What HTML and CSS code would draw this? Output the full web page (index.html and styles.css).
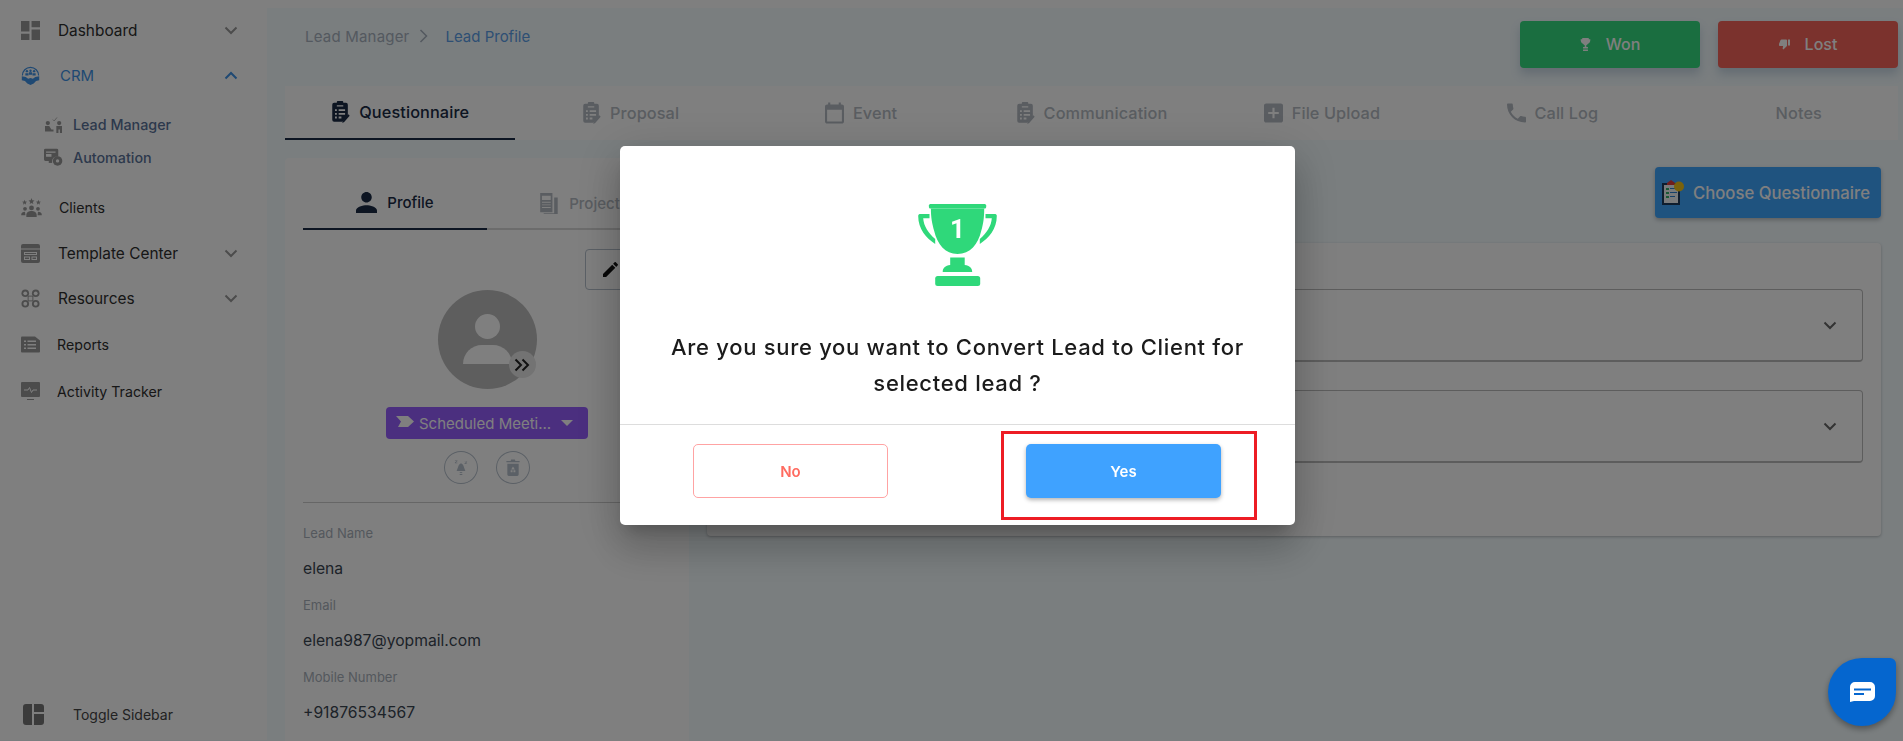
FILE: index.html
```html
<!DOCTYPE html>
<html lang="en">
<head>
    <meta charset="UTF-8">
    <meta name="viewport" content="width=device-width, initial-scale=1.0">
    <title>Lead Profile</title>
    <link rel="stylesheet" href="styles.css">
</head>
<body>
    <svg class="sprite" aria-hidden="true">
        <symbol id="i-clipboard" viewBox="0 0 20 24">
            <path d="M7 0h5a1 1 0 0 1 1 1v1h3a2 2 0 0 1 2 2v12l-6 6.500H3a2 2 0 0 1-2-2V4a2 2 0 0 1 2-2h3V1a1 1 0 0 1 1-1z"/>
            <path fill="var(--cut, #fff)" d="M6 4.500h7v1.500H6zM4 9h2v2H4zm4 0h7v2H8zm-4 4h2v2H4zm4 0h7v2H8zm-4 4h2v2H4zm4 0h3v2H8z"/>
            <path d="M18.500 14.500l1.500 1.500-6 7-2 1 .5-2.500z"/>
        </symbol>
        <symbol id="i-chevron-down" viewBox="0 0 14 9">
            <path d="M1.500 1.500L7 7l5.500-5.500" fill="none" stroke="currentColor" stroke-width="2"/>
        </symbol>
    </svg>

    <div class="app">
        <aside class="sidebar">
            <nav class="nav">
                <a class="nav-item big"><svg class="nav-icon" viewBox="3 3 18 18"><path d="M3 13h8V3H3v10zm0 8h8v-6H3v6zm10 0h8V11h-8v10zm0-18v6h8V3h-8z"/></svg><span class="nav-text">Dashboard</span><svg class="nav-arrow"><use href="#i-chevron-down"/></svg></a>
                <a class="nav-item active"><svg class="nav-icon" viewBox="0 0 24 24"><path d="M12 1a11 11 0 0 0-11 11h1.500A9.500 9.500 0 0 1 12 2.500 9.500 9.500 0 0 1 21.500 12H23A11 11 0 0 0 12 1z"/><circle cx="7.500" cy="6.500" r="1.500"/><circle cx="12" cy="6" r="1.500"/><circle cx="16.500" cy="6.500" r="1.500"/><path d="M5.500 9h4v3h-4zm4.500-1h4v3h-4zm4.500 1h4v3h-4zM1 13l5 1 3 2 3-1 3 1 3-2 5-1v5l-4 1-3 3-4 2-4-2-3-3-4-1z"/></svg><span class="nav-text crm-text">CRM</span><svg class="nav-arrow up"><use href="#i-chevron-down"/></svg></a>
                <div class="subnav">
                    <a class="sub-item"><svg class="sub-icon" viewBox="0 0 24 24"><circle cx="4" cy="10" r="3"/><circle cx="20" cy="10" r="3"/><path d="M0 14h6l3 5h3v3H0zM16 14h8v10h-3v-5h-2v5h-3z"/><path d="M11 5l2 2 4-5" fill="none" stroke="#999" stroke-width="1"/></svg><span>Lead Manager</span></a>
                    <a class="sub-item"><svg class="sub-icon wide" viewBox="0 0 28 26"><path d="M2 0h17a2 2 0 0 1 2 2v10h-4a7 7 0 0 0-5 6H2a2 2 0 0 1-2-2V2a2 2 0 0 1 2-2z"/><path fill="#fff" d="M3 4h14v2H3zM3 8h8v4H3z"/><path d="M7 18h5v3H7z"/><circle cx="20" cy="18" r="7"/><circle cx="20" cy="18" r="2.500" fill="#fff"/></svg><span>Automation</span></a>
                </div>
                <a class="nav-item clients"><svg class="nav-icon wide" viewBox="0 0 24 22"><path d="M12 0l1 2.500 2.500.3-2 1.700.6 2.500L12 5.700 9.900 7l.6-2.500-2-1.700 2.500-.3zM4 2l.8 2 2.200.2-1.700 1.400.5 2.100L4 6.500 2.200 7.700l.5-2.100L1 4.200 3.200 4zm16 0l.8 2 2.200.2-1.700 1.400.5 2.100L20 6.500l-1.800 1.200.5-2.100L17 4.200l2.200-.2z"/><circle cx="12" cy="11.500" r="2.800"/><circle cx="4.500" cy="12.500" r="2.200"/><circle cx="19.500" cy="12.500" r="2.200"/><path d="M6 22v-2.500c0-3 3-4.500 6-4.500s6 1.500 6 4.500V22zM0 20c0-3 2-4 4.500-4L5 20zm24 0c0-3-2-4-4.500-4L19 20z"/></svg><span class="nav-text">Clients</span></a>
                <a class="nav-item big"><svg class="nav-icon" viewBox="0 0 19 19"><path d="M2 0h15a2 2 0 0 1 2 2v15a2 2 0 0 1-2 2H2a2 2 0 0 1-2-2V2a2 2 0 0 1 2-2z"/><path fill="#fff" d="M0 4.500h19v1H0zM3 8h13v3H3zM3 12.500h6V16H3zm7.500 0H16V16h-5.500z"/><path d="M4 9h11v1H4zm0 4.500h4V15H4zm7.500 0H15V15h-3.500z"/></svg><span class="nav-text">Template Center</span><svg class="nav-arrow"><use href="#i-chevron-down"/></svg></a>
                <a class="nav-item big"><svg class="nav-icon" viewBox="0 0 20 20"><circle cx="4.500" cy="4.500" r="4"/><circle cx="15.500" cy="4.500" r="4"/><circle cx="4.500" cy="15.500" r="4"/><circle cx="15.500" cy="15.500" r="4"/><rect x="7.500" y="7.500" width="5" height="5" fill="#fff" stroke="#999"/><circle cx="4.500" cy="4.500" r="2" fill="#fff"/><circle cx="15.500" cy="4.500" r="2" fill="#fff"/><circle cx="4.500" cy="15.500" r="2" fill="#fff"/><circle cx="15.500" cy="15.500" r="2" fill="#fff"/></svg><span class="nav-text">Resources</span><svg class="nav-arrow"><use href="#i-chevron-down"/></svg></a>
                <a class="nav-item reports"><svg class="nav-icon" viewBox="0 0 19 16"><path d="M1 0h13l5 4v11a1 1 0 0 1-1 1H1a1 1 0 0 1-1-1V1a1 1 0 0 1 1-1z"/><path fill="#fff" d="M3 4h2v1.500H3zm3.500 0H15v1.500H6.500zM3 7.500h2V9H3zm3.500 0H15V9H6.500zM3 11h2v1.500H3zm3.500 0H15v1.500H6.500z"/></svg><span class="nav-text">Reports</span></a>
                <a class="nav-item activity"><svg class="nav-icon" viewBox="0 0 19 19"><path d="M1 0h17a1 1 0 0 1 1 1v13a1 1 0 0 1-1 1H1a1 1 0 0 1-1-1V1a1 1 0 0 1 1-1zM6 17h7v1H6z"/><path d="M3 8h4l1.500-2.500 2 5L12 8h4" fill="none" stroke="#fff"/></svg><span class="nav-text">Activity Tracker</span></a>
            </nav>
            <a class="toggle-sidebar"><svg class="toggle-icon" viewBox="0 0 21 21"><path d="M3 0h6v21H3a3 3 0 0 1-3-3V3a3 3 0 0 1 3-3zm8 0h7a3 3 0 0 1 3 3v5H11zm0 10h10v8a3 3 0 0 1-3 3h-7z"/></svg><span>Toggle Sidebar</span></a>
        </aside>

        <main class="main">
            <div class="page-head">
                <div class="breadcrumb">
                    <span>Lead Manager</span>
                    <svg class="crumb-sep" viewBox="0 0 9 14"><path d="M1.500 1l6 6-6 6" fill="none" stroke="currentColor" stroke-width="1.500"/></svg>
                    <span class="crumb-current">Lead Profile</span>
                </div>
                <div class="head-actions">
                    <button class="btn-status won"><svg class="btn-icon" viewBox="0 0 12 16"><path d="M2 0h8v1.500h2c0 3-1 5-3 5.500-.5 1-1.500 1.500-2 1.500V11h2v2H3v-2h2V8.500C4.500 8.500 3.500 8 3 7 1 6.500 0 4.500 0 1.500h2zM3 14h6v2H3z"/></svg>Won</button>
                    <button class="btn-status lost"><svg class="btn-icon" viewBox="1 3 22 20"><path d="M15 3H6c-.83 0-1.540.500-1.840 1.220l-3.020 7.050c-.090.230-.140.470-.140.730v2c0 1.100.900 2 2 2h6.310l-.950 4.570-.030.320c0 .410.170.790.440 1.060L9.830 23l6.590-6.590c.360-.360.580-.860.580-1.410V5c0-1.100-.900-2-2-2zm4 0v12h4V3h-4z"/></svg>Lost</button>
                </div>
            </div>

            <div class="tabs">
                <div class="tab active"><svg class="tab-icon"><use href="#i-clipboard"/></svg>Questionnaire</div>
                <div class="tab"><svg class="tab-icon"><use href="#i-clipboard"/></svg>Proposal</div>
                <div class="tab"><svg class="tab-icon" viewBox="3 2 18 20"><path d="M19 4h-1V2h-2v2H8V2H6v2H5c-1.100 0-2 .900-2 2v14c0 1.100.900 2 2 2h14c1.100 0 2-.900 2-2V6c0-1.100-.900-2-2-2zm0 16H5V9h14v11z"/></svg>Event</div>
                <div class="tab"><svg class="tab-icon"><use href="#i-clipboard"/></svg>Communication</div>
                <div class="tab"><svg class="tab-icon plus" viewBox="3 3 18 18"><path d="M19 3H5c-1.110 0-2 .900-2 2v14c0 1.100.890 2 2 2h14c1.100 0 2-.900 2-2V5c0-1.100-.900-2-2-2zm-2 10h-4v4h-2v-4H7v-2h4V7h2v4h4v2z"/></svg>File Upload</div>
                <div class="tab"><svg class="tab-icon" viewBox="3 3 18 18"><path d="M6.620 10.790c1.440 2.830 3.760 5.140 6.590 6.590l2.200-2.200c.270-.270.670-.360 1.020-.240 1.120.370 2.330.570 3.570.570.550 0 1 .450 1 1V20c0 .550-.450 1-1 1-9.390 0-17-7.610-17-17 0-.550.450-1 1-1h3.500c.550 0 1 .450 1 1 0 1.250.200 2.450.570 3.570.110.350.030.740-.250 1.020l-2.200 2.200z"/></svg>Call Log</div>
                <div class="tab notes">Notes</div>
            </div>

            <div class="content">
                <section class="profile-card">
                    <div class="profile-tabs">
                        <div class="profile-tab active"><svg class="person-icon" viewBox="4 4 16 16"><path d="M12 12c2.210 0 4-1.790 4-4s-1.790-4-4-4-4 1.790-4 4 1.790 4 4 4zm0 2c-2.670 0-8 1.340-8 4v2h16v-2c0-2.660-5.330-4-8-4z"/></svg>Profile</div>
                        <div class="profile-tab"><svg class="person-icon" viewBox="0 0 21 24"><path d="M1 0h14v22H1z"/><path fill="#fff" d="M3 3h10v5H3zm0 7h10v1H3zm0 3h10v1H3zm0 3h10v1H3z"/><path d="M17 5h4v19H5v-1h12z"/></svg>Project</div>
                    </div>
                    <div class="edit-row">
                        <button class="btn-edit"><svg viewBox="3 3 18 18"><path d="M3 17.250V21h3.750L17.810 9.940l-3.750-3.750L3 17.250zM20.710 7.040c.390-.390.390-1.020 0-1.410l-2.340-2.340c-.390-.390-1.020-.390-1.410 0l-1.830 1.830 3.750 3.750 1.830-1.830z"/></svg></button>
                    </div>
                    <div class="avatar">
                        <span class="avatar-head"></span>
                        <span class="avatar-body"></span>
                        <span class="avatar-chip"><svg viewBox="0 0 16 14"><path d="M1.500 1.500L7 7l-5.500 5.500M8.500 1.500L14 7l-5.500 5.500" fill="none" stroke="currentColor" stroke-width="2"/></svg></span>
                    </div>
                    <button class="status-select">
                        <svg class="status-tag" viewBox="0 0 18 11"><path d="M0 0h12l6 5.500-6 5.500H2l3-5.500z"/></svg>
                        <span class="status-label">Scheduled Meeti...</span>
                        <span class="status-caret"></span>
                    </button>
                    <div class="round-actions">
                        <span class="round-btn"><svg viewBox="0 0 16 18"><path d="M8 4l2 1.500c1 1 1.500 4 3 7.500H3c1.500-3.500 2-6.500 3-7.500zM6 14h4l-2 1.500zM6.500 16.500h3v1h-3z"/><path d="M1 1h3v.7L2 3.500h2V4H1v-.6l2-1.900H1zM12 2h3v.7l-2 1.800h2V5h-3v-.6l2-1.900h-2z"/></svg></span>
                        <span class="round-btn"><svg viewBox="0 0 14 18"><path d="M0 2h4.500l.5-1.500h4L9.500 2H14v1.500H0zM1 5h12v11.500a1.500 1.500 0 0 1-1.500 1.500h-9A1.500 1.500 0 0 1 1 16.500z"/><path d="M7 8l2 3H5zM4.500 12h2v2h-2zm3 0h2v2h-2z" fill="#fff"/></svg></span>
                    </div>
                    <dl class="lead-info">
                        <dt>Lead Name</dt>
                        <dd>elena</dd>
                        <dt>Email</dt>
                        <dd>elena987@yopmail.com</dd>
                        <dt>Mobile Number</dt>
                        <dd>+91876534567</dd>
                    </dl>
                </section>

                <section class="questions">
                    <div class="questions-head">
                        <button class="btn-choose"><svg class="choose-icon" viewBox="0 0 22 25"><path fill="#1c3a5c" d="M0 3h18v22H0z"/><path fill="#f3f6f8" d="M2 5h14v18H2z"/><path fill="#e03a3a" d="M5 3l4-3 4 3v2H5z"/><path fill="#35b06a" d="M4 8h3v2H4zm0 4h3v2H4zm0 4h3v2H4z"/><path fill="#2a80d0" d="M8 8h7v1H8zm0 4h7v1H8zm0 4h5v1H8z"/><circle cx="17" cy="6.500" r="5" fill="#f5c518"/></svg>Choose Questionnaire</button>
                    </div>
                    <div class="question-card">
                        <div class="accordion"><svg class="accordion-arrow"><use href="#i-chevron-down"/></svg></div>
                        <div class="accordion"><svg class="accordion-arrow"><use href="#i-chevron-down"/></svg></div>
                    </div>
                </section>
            </div>
        </main>
    </div>

    <div class="overlay">
        <div class="modal">
            <div class="modal-body">
                <svg class="trophy" viewBox="0 0 78.600 82">
                    <rect x="10.700" y="0" width="57.300" height="4.500" rx="1.500"/>
                    <path d="M12.700 4.500H66C66 14 65 20 63 27 60 40 52 50 39.300 50 27 50 19 40 16 27 14 20 12.700 14 12.700 4.500z"/>
                    <path d="M1.500 10h9.800v4.300H5C5.500 22 10 29 17 35v5C8 34 0 25 0 12c0-1 .5-2 1.500-2z"/>
                    <path d="M77.100 10h-9.800v4.300h6.300C73.100 22 68.600 29 61.600 35v5c9-6 17-15 17-28 0-1-.5-2-1.500-2z"/>
                    <path d="M32 53.500h14.500V61c5 .5 7.500 3 7.500 7H24.500c0-4 2.500-6.500 7.500-7z"/>
                    <rect x="17" y="72" width="45" height="10" rx="2.500"/>
                    <text class="trophy-num" x="39.300" y="34" text-anchor="middle">1</text>
                </svg>
                <p class="modal-text">Are you sure you want to Convert Lead to Client for<br>selected lead ?</p>
            </div>
            <div class="modal-footer">
                <button class="btn-no">No</button>
                <button class="btn-yes">Yes</button>
                <span class="highlight"></span>
            </div>
        </div>
    </div>

    <button class="chat-widget"><svg viewBox="0 0 25 20"><path d="M5 0h15a5 5 0 0 1 5 5v9a5 5 0 0 1-5 5H4l-4 1V5a5 5 0 0 1 5-5z" fill="#fff"/><path d="M4 6.500h17v2H4zM4 11h10v2H4z" fill="#0566cf"/></svg></button>
</body>
</html>
```

FILE: styles.css
```css
* {
    box-sizing: border-box;
}
html, body {
    margin: 0;
    height: 100%;
    overflow: hidden;
}
body {
    font-family: Inter, "Noto Sans", sans-serif;
    color: #333;
    background-color: #f4fcff;
    border-top: 8px solid #fff;
}
button {
    font-family: inherit;
    border: none;
    cursor: pointer;
}
.sprite {
    position: absolute;
    width: 0;
    height: 0;
}
.app {
    display: flex;
    height: 733px;
    border-top: 1px solid #e2e2e2;
    margin-top: -1px;
}

/* sidebar */
.sidebar {
    width: 267px;
    flex-shrink: 0;
    background-color: #fff;
    display: flex;
    flex-direction: column;
    justify-content: space-between;
    padding: 0 0 8px 21px;
}
.nav-item {
    display: flex;
    align-items: center;
    height: 45px;
    font-size: 14.200px;
    color: #2e2e2e;
}
.nav-item.big {
    font-size: 15.400px;
}
.nav-item.clients {
    margin-bottom: 1px;
}
.nav-item.reports {
    margin-top: 1px;
}
.nav-item.activity {
    margin-top: 2px;
}
.nav-icon {
    width: 19px;
    height: 19px;
    fill: #999;
    flex-shrink: 0;
}
.nav-icon.wide {
    width: 21px;
}
.nav-text {
    margin-left: 18px;
}
.wide + .nav-text {
    margin-left: 17px;
}
.reports .nav-text, .activity .nav-text {
    margin-left: 17px;
}
.crm-text {
    margin-left: 20px;
    font-size: 15px;
}
.nav-arrow {
    width: 14px;
    height: 9px;
    margin-left: auto;
    margin-right: 29px;
    color: #999;
}
.nav-item.active {
    color: #3f92e6;
}
.nav-item.active .nav-icon {
    fill: #3f92e6;
}
.nav-item.active .nav-arrow {
    color: #3f92e6;
    transform: rotate(180deg);
}
.subnav {
    padding: 10px 0 11px 24px;
}
.sub-item {
    display: flex;
    align-items: center;
    height: 33px;
    font-size: 14.300px;
    font-weight: 500;
    color: #5a7299;
}
.sub-icon {
    width: 17px;
    height: 17px;
    fill: #999;
    margin-right: 11px;
}
.sub-icon.wide {
    width: 19px;
    height: 19px;
    margin-left: -1px;
    margin-right: 10px;
}
.toggle-sidebar {
    display: flex;
    align-items: center;
    font-size: 14px;
    color: #444;
    padding: 0 0 7px 2px;
}
.toggle-icon {
    width: 21px;
    height: 21px;
    fill: #777;
    margin-right: 29px;
}

/* main column */
.main {
    flex: 1;
    min-width: 0;
    padding: 0 5px 0 18px;
}
.page-head {
    display: flex;
    justify-content: space-between;
    height: 78px;
    padding-top: 13px;
}
.breadcrumb {
    display: flex;
    align-items: center;
    height: 30px;
    padding-left: 20px;
    font-size: 15px;
    letter-spacing: 0.2px;
    color: #a8b2bf;
}
.crumb-sep {
    width: 9px;
    height: 14px;
    margin: 0 17px 0 10px;
}
.crumb-current {
    letter-spacing: 0;
    color: #5c9fe8;
}
.head-actions {
    display: flex;
    gap: 18px;
}
.btn-status {
    display: flex;
    align-items: center;
    justify-content: center;
    gap: 15px;
    width: 180px;
    height: 47px;
    padding-bottom: 2px;
    border-radius: 4px;
    color: #fff;
    font-size: 16px;
    font-weight: 500;
    box-shadow: 0 6px 10px rgba(70, 110, 150, 0.25);
}
.btn-status.won {
    background-color: #34dc80;
}
.btn-status.lost {
    background-color: #f6645a;
}
.btn-icon {
    width: 11px;
    height: 13px;
    fill: #fff;
}
.tabs {
    display: grid;
    grid-template-columns: repeat(7, 1fr);
    background-color: #fff;
    height: 54px;
}
.tab {
    display: flex;
    align-items: center;
    justify-content: center;
    gap: 9px;
    font-size: 16.300px;
    font-weight: 500;
    letter-spacing: 0.1px;
    color: #b4bac2;
}
.tab.active {
    color: #1a2b45;
    border-bottom: 2px solid #1a2b45;
}
.tab.notes {
    padding-left: 32px;
}
.tab-icon {
    width: 19px;
    height: 22px;
    fill: #b4bac2;
    --cut: #fff;
}
.tab.active .tab-icon {
    fill: #1a2b45;
}
.content {
    display: flex;
    gap: 18px;
    padding-top: 18px;
}

/* profile card */
.profile-card {
    width: 404px;
    height: 583px;
    flex-shrink: 0;
    background-color: #fff;
    border-radius: 4px 4px 0 0;
    padding: 0 18px;
}
.profile-tabs {
    display: grid;
    grid-template-columns: 184px 1fr;
    height: 72px;
    border-bottom: 2px solid #d8d8d8;
}
.profile-tab {
    display: flex;
    align-items: center;
    justify-content: center;
    gap: 10px;
    padding-top: 18px;
    height: 72px;
    font-size: 15px;
    font-weight: 500;
    color: #b4bac2;
}
.profile-tab.active {
    color: #1a2b45;
    border-bottom: 2px solid #1a2b45;
}
.person-icon {
    width: 21px;
    height: 21px;
    fill: #b4bac2;
}
.profile-tab.active .person-icon {
    fill: #1a2b45;
}
.edit-row {
    display: flex;
    justify-content: flex-end;
    padding: 19px 34px 0 0;
}
.btn-edit {
    width: 52px;
    height: 41px;
    border: 1px solid #b6c0cc;
    border-radius: 4px;
    background: #fff;
    padding: 0 0 0 17px;
    display: flex;
    align-items: center;
}
.btn-edit svg {
    width: 15px;
    height: 15px;
    fill: #111;
}
.avatar {
    position: relative;
    width: 99px;
    height: 99px;
    margin: 0 auto;
    border-radius: 50%;
    background-color: #bdbdbd;
}
.avatar-head {
    position: absolute;
    left: 37px;
    top: 24px;
    width: 25px;
    height: 25px;
    border-radius: 50%;
    background-color: #fff;
}
.avatar-body {
    position: absolute;
    left: 25px;
    top: 55px;
    width: 49px;
    height: 19px;
    border-radius: 25px 25px 0 0;
    background-color: #fff;
}
.avatar-chip {
    position: absolute;
    left: 71px;
    top: 61px;
    width: 27px;
    height: 27px;
    border-radius: 50%;
    background-color: #e6e6e6;
    color: #222;
    display: flex;
    align-items: center;
    justify-content: center;
}
.avatar-chip svg {
    width: 16px;
    height: 14px;
}
.status-select {
    display: flex;
    align-items: center;
    width: 202px;
    height: 32px;
    margin: 18px auto 0;
    padding: 0 15px 0 10px;
    border-radius: 4px;
    background-color: #965eff;
    color: #fff;
    font-size: 15px;
    white-space: nowrap;
}
.status-tag {
    width: 18px;
    height: 11px;
    fill: #fff;
    margin-right: 5px;
    margin-top: -3px;
}
.status-label {
    flex: 1;
    text-align: left;
}
.status-caret {
    border-left: 6px solid transparent;
    border-right: 6px solid transparent;
    border-top: 6px solid #fff;
}
.round-actions {
    display: flex;
    justify-content: center;
    gap: 18px;
    margin-top: 12px;
}
.round-btn {
    width: 34px;
    height: 33px;
    border: 1px solid #b6c0cc;
    border-radius: 50%;
    display: flex;
    align-items: center;
    justify-content: center;
}
.round-btn svg {
    width: 14px;
    height: 17px;
    fill: #b6c0cc;
}
.lead-info {
    margin: 18px 0 0;
    padding-top: 12px;
    border-top: 1px solid #ccc;
    line-height: 36px;
}
.lead-info dt {
    font-size: 13px;
    color: #a8b0ba;
}
.lead-info dd {
    margin: 0;
    font-size: 15.700px;
    color: #3a4652;
}

/* questionnaire column */
.questions {
    flex: 1;
    min-width: 0;
    padding-right: 17px;
}
.questions-head {
    display: flex;
    justify-content: flex-end;
    padding-top: 9px;
}
.btn-choose {
    display: flex;
    align-items: center;
    gap: 9px;
    width: 226px;
    height: 51px;
    padding-left: 7px;
    border-radius: 4px;
    background-color: #3fa6ff;
    color: #fff;
    font-size: 16.700px;
    font-weight: 500;
    box-shadow: 0 2px 4px rgba(0, 0, 0, 0.25);
}
.choose-icon {
    width: 22px;
    height: 25px;
}
.question-card {
    margin-top: 25px;
    height: 293px;
    padding: 46px 18px 0;
    background-color: #fff;
    border-radius: 4px;
    box-shadow: 0 1px 3px rgba(0, 0, 0, 0.25);
}
.accordion {
    height: 73px;
    margin-bottom: 28px;
    border: 1px solid #bbb;
    border-bottom-width: 2px;
    border-radius: 4px;
    display: flex;
    align-items: center;
    justify-content: flex-end;
    padding-right: 25px;
}
.accordion-arrow {
    width: 14px;
    height: 9px;
    color: #666;
}

/* convert dialog */
.overlay {
    position: fixed;
    top: 0;
    left: 0;
    right: 0;
    bottom: 0;
    background-color: rgba(0, 0, 0, 0.5);
    padding: 146px 0 0 620px;
}
.modal {
    width: 675px;
    height: 379px;
    background-color: #fff;
    border-radius: 5px;
    box-shadow: 0 11px 15px -7px rgba(0, 0, 0, 0.2), 0 24px 38px 3px rgba(0, 0, 0, 0.14), 0 9px 46px 8px rgba(0, 0, 0, 0.12);
}
.modal-body {
    height: 279px;
    padding-top: 58px;
    text-align: center;
    border-bottom: 1px solid #ddd;
}
.trophy {
    display: block;
    width: 79px;
    height: 82px;
    margin: 0 auto;
    fill: #2fd87a;
}
.trophy-num {
    font-family: Roboto, sans-serif;
    font-size: 26px;
    font-weight: 700;
    fill: #fff;
}
.modal-text {
    margin: 43px 0 0;
    font-size: 22px;
    letter-spacing: 0.7px;
    line-height: 36px;
    font-weight: 500;
    color: #1b1b1b;
}
.modal-footer {
    position: relative;
    display: flex;
    justify-content: space-between;
    padding: 19px 74px 0 73px;
}
.btn-no, .btn-yes {
    width: 195px;
    height: 54px;
    border-radius: 5px;
    font-size: 15px;
    font-weight: 600;
}
.btn-no {
    background: #fff;
    border: 1px solid #ffa3a3;
    color: #ff6b60;
}
.btn-yes {
    background-color: #3fa2ff;
    color: #fff;
    box-shadow: 0 2px 4px rgba(0, 0, 0, 0.3);
}
.highlight {
    position: absolute;
    left: 381px;
    top: 6px;
    width: 256px;
    height: 89px;
    border: 3px solid #ed1c24;
}
.chat-widget {
    position: fixed;
    left: 1828px;
    top: 658px;
    width: 68px;
    height: 68px;
    padding: 0;
    border-radius: 50% 6px 50% 50%;
    background-color: #0566cf;
    box-shadow: 0 3px 6px rgba(0, 0, 0, 0.35);
    display: flex;
    align-items: center;
    justify-content: center;
}
.chat-widget svg {
    width: 25px;
    height: 20px;
}
```
